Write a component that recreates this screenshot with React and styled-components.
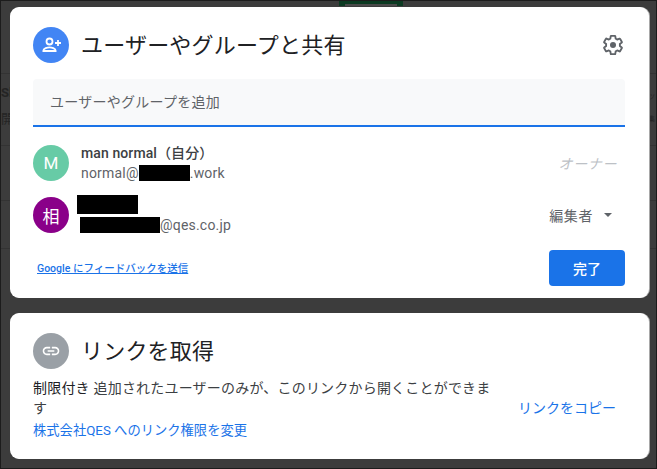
import React from "react";
import styled, { createGlobalStyle } from "styled-components";

const GlobalStyle = createGlobalStyle`
  html, body {
    margin: 0;
    padding: 0;
    background: #3c3c3c;
  }
  body {
    font-family: Roboto, "Noto Sans CJK JP", sans-serif;
  }
`;

const rule = "linear-gradient(#333, #333)";

const Page = styled.div`
  position: relative;
  width: 657px;
  height: 469px;
  box-sizing: border-box;
  padding: 6px 7px 0 9px;
  border: 1px solid #1c1c1c;
  background-color: #3c3c3c;
  background-image: ${rule}, ${rule}, ${rule}, ${rule};
  background-size: 100% 1px;
  background-repeat: no-repeat;
  background-position: 0 72px, 0 144px, 0 199px, 0 247px;
  overflow: hidden;
  display: flex;
  flex-direction: column;
  gap: 15px;
`;

/* bits of the darkened sheet that peek out from behind the dialog */
const SheetTab = styled.div`
  position: absolute;
  top: 0;
  left: 338px;
  width: 64px;
  height: 5px;
  box-sizing: border-box;
  background: #4a4a4a;
  border-left: 6px solid #0c3a22;
  border-right: 6px solid #0c3a22;
  border-top: 3px solid #0c3a22;
`;

const SheetText = styled.span`
  position: absolute;
  top: ${(p) => p.$top}px;
  left: ${(p) => p.$left}px;
  font-size: ${(p) => p.$size || 13}px;
  line-height: 16px;
  font-weight: ${(p) => p.$weight || 400};
  color: #242424;
`;

const Card = styled.section`
  position: relative;
  background: #fff;
  border-radius: 9px;
  box-sizing: border-box;
  padding: 20px 24px 0 23px;
  height: ${(p) => p.$height}px;
  box-shadow: 1px 0 0 #a8a8a8;
`;

const Header = styled.div`
  display: flex;
  align-items: center;
  height: 36px;
  gap: 12px;
`;

const IconCircle = styled.div`
  width: 36px;
  height: 36px;
  border-radius: 50%;
  background: ${(p) => p.$color};
  color: #fff;
  flex-shrink: 0;
  display: flex;
  align-items: center;
  justify-content: center;
  font-size: 17px;
`;

const Title = styled.h1`
  margin: 0;
  flex: 1;
  padding-bottom: 4px;
  font-size: 22px;
  font-weight: 400;
  letter-spacing: 0.2px;
  color: #202124;
  white-space: nowrap;
`;

const Gear = styled.svg`
  width: 24px;
  height: 24px;
  color: #5f6368;
`;

const AddInput = styled.div`
  margin-top: 16px;
  height: 48px;
  box-sizing: border-box;
  padding: 0 17px 2px;
  display: flex;
  align-items: center;
  background: #f8f9fa;
  border-radius: 4px 4px 0 0;
  border-bottom: 2px solid #1a73e8;
  font-size: 14px;
  letter-spacing: 0.25px;
  color: #5f6368;
`;

const Person = styled.div`
  display: flex;
  align-items: center;
  margin-top: ${(p) => p.$top}px;
  height: 36px;
  gap: 12px;
`;

const PersonText = styled.div`
  flex: 1;
  display: flex;
  flex-direction: column;
`;

const Name = styled.div`
  display: flex;
  align-items: center;
  height: 20px;
  font-size: 14px;
  font-weight: 500;
  letter-spacing: 0.1px;
  color: #3c4043;
  margin-top: -1px;
`;

const Email = styled.div`
  display: flex;
  align-items: center;
  height: 20px;
  font-size: 14px;
  color: #5f6368;
  letter-spacing: 0.2px;
  margin-top: 1px;
`;

const Redacted = styled.span`
  display: inline-block;
  flex-shrink: 0;
  width: ${(p) => p.$width}px;
  height: ${(p) => p.$height}px;
  margin-left: ${(p) => p.$shift || 0}px;
  background: #000;
`;

const Owner = styled.div`
  font-size: 14px;
  font-style: italic;
  letter-spacing: 0.6px;
  color: #bdc1c6;
  margin-right: 8px;
  padding-bottom: 1px;
`;

const Role = styled.div`
  display: flex;
  align-items: center;
  gap: 11px;
  margin-right: 13px;
  font-size: 14px;
  letter-spacing: 0.6px;
  color: #5f6368;
`;

const Caret = styled.span`
  width: 0;
  height: 0;
  border-left: 4.5px solid transparent;
  border-right: 4.5px solid transparent;
  border-top: 4.5px solid #5f6368;
`;

const Footer = styled.div`
  display: flex;
  align-items: center;
  justify-content: space-between;
  margin-top: 17px;
  padding-left: 4px;
`;

const Feedback = styled.a`
  font-size: 10.5px;
  font-weight: 500;
  color: #1a73e8;
  text-decoration: underline;
  margin-bottom: 2px;
`;

const DoneButton = styled.button`
  width: 76px;
  height: 36px;
  border: none;
  border-radius: 4px;
  background: #1a73e8;
  color: #fff;
  font-family: inherit;
  font-size: 14px;
  font-weight: 500;
  padding: 0;
`;

const LinkBody = styled.div`
  display: flex;
  align-items: center;
  margin-top: 9px;
`;

const LinkText = styled.div`
  width: 472px;
  box-sizing: border-box;
  padding-right: 6px;
  flex-shrink: 0;
  font-size: 14px;
  line-height: 20px;
  letter-spacing: 0.2px;
  color: #3c4043;
`;

const Strong = styled.span`
  color: #202124;
`;

const BlueLink = styled.a`
  display: block;
  color: #1a73e8;
  font-size: ${(p) => p.$size || 14}px;
  letter-spacing: 0;
  margin-top: ${(p) => p.$top || 0}px;
  margin-left: ${(p) => p.$left || 0}px;
  margin-bottom: ${(p) => p.$bottom || 0}px;
`;

export default function App() {
  return (
    <Page>
      <GlobalStyle />
      <SheetTab />
      <SheetText $top={84} $left={0} $weight={700}>Sl</SheetText>
      <SheetText $top={110} $left={0}>開</SheetText>
      <SheetText $top={88} $left={647} $size={7}>ツ</SheetText>
      <SheetText $top={110} $left={647} $size={7}>集</SheetText>
      <Card $height={291}>
        <Header>
          <IconCircle $color="#4285f4">
            <svg width="24" height="24" viewBox="0 0 24 24" fill="none" stroke="#fff" strokeWidth="1.8">
              <circle cx="10.5" cy="8.5" r="3" />
              <path d="M4.4 17.6c0-2.2 4-3.2 6.1-3.2s6.1 1 6.1 3.2v.4H4.4z" />
              <path d="M19 7v6M16 10h6" />
            </svg>
          </IconCircle>
          <Title>ユーザーやグループと共有</Title>
          <Gear viewBox="0 0 24 24">
            <g transform="translate(12 12) scale(0.92) translate(-12 -12)">
              <path
                fill="none"
                stroke="currentColor"
                strokeWidth="2"
                strokeLinejoin="round"
                d="M19.43 12.98c.04-.32.07-.64.07-.98s-.03-.66-.07-.98l2.11-1.65c.19-.15.24-.42.12-.64l-2-3.46c-.12-.22-.39-.3-.61-.22l-2.49 1c-.52-.4-1.08-.73-1.69-.98l-.38-2.65C14.46 2.18 14.25 2 14 2h-4c-.25 0-.46.18-.49.42l-.38 2.65c-.61.25-1.17.59-1.69.98l-2.49-1c-.23-.09-.49 0-.61.22l-2 3.46c-.13.22-.07.49.12.64l2.11 1.65c-.04.32-.07.65-.07.98s.03.66.07.98l-2.11 1.65c-.19.15-.24.42-.12.64l2 3.46c.12.22.39.3.61.22l2.49-1c.52.4 1.08.73 1.69.98l.38 2.65c.03.24.24.42.49.42h4c.25 0 .46-.18.49-.42l.38-2.65c.61-.25 1.17-.59 1.69-.98l2.49 1c.23.09.49 0 .61-.22l2-3.46c.12-.22.07-.49-.12-.64l-2.11-1.65z"
              />
            </g>
            <circle cx="12" cy="12" r="3" fill="currentColor" />
          </Gear>
        </Header>
        <AddInput>ユーザーやグループを追加</AddInput>
        <Person $top={18}>
          <IconCircle $color="#67cba6">M</IconCircle>
          <PersonText>
            <Name>man normal（自分）</Name>
            <Email>
              normal@<Redacted $width={51} $height={16} />.work
            </Email>
          </PersonText>
          <Owner>オーナー</Owner>
        </Person>
        <Person $top={16}>
          <IconCircle $color="#8a0089">相</IconCircle>
          <PersonText>
            <Name>
              <Redacted $width={61} $height={19} $shift={-4} />
            </Name>
            <Email>
              <Redacted $width={80} $height={16} $shift={-1} />@qes.co.jp
            </Email>
          </PersonText>
          <Role>
            編集者
            <Caret />
          </Role>
        </Person>
        <Footer>
          <Feedback>Google にフィードバックを送信</Feedback>
          <DoneButton>完了</DoneButton>
        </Footer>
      </Card>
      <Card $height={146}>
        <Header>
          <IconCircle $color="#9aa0a6">
            <svg width="20" height="20" viewBox="0 0 24 24" fill="#fff">
              <path d="M3.9 12c0-1.71 1.39-3.1 3.1-3.1h4V7H7c-2.76 0-5 2.24-5 5s2.24 5 5 5h4v-1.9H7c-1.71 0-3.1-1.39-3.1-3.1zM8 13h8v-2H8v2zm9-6h-4v1.9h4c1.71 0 3.1 1.39 3.1 3.1s-1.39 3.1-3.1 3.1h-4V17h4c2.76 0 5-2.24 5-5s-2.24-5-5-5z" />
            </svg>
          </IconCircle>
          <Title>リンクを取得</Title>
        </Header>
        <LinkBody>
          <LinkText>
            <Strong>制限付き</Strong> 追加されたユーザーのみが、このリンクから開くことができます
            <BlueLink $top={3} $size={13.3}>株式会社QES へのリンク権限を変更</BlueLink>
          </LinkText>
          <BlueLink $left={13} $bottom={6}>リンクをコピー</BlueLink>
        </LinkBody>
      </Card>
    </Page>
  );
}
